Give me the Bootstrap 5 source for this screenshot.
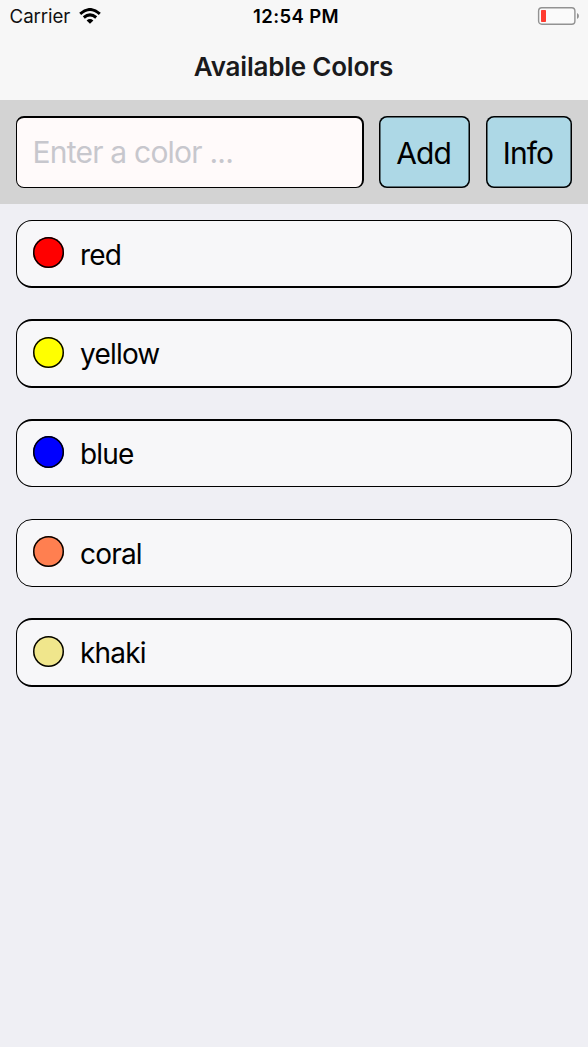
<!DOCTYPE html>
<html lang="en">
<head>
<meta charset="utf-8">
<meta name="viewport" content="width=device-width, initial-scale=1">
<title>Available Colors</title>
<link href="https://cdn.jsdelivr.net/npm/bootstrap@5.3.0/dist/css/bootstrap.min.css" rel="stylesheet">
<style>
body{background:#efeff4;color:#000;font-family:Inter,"Liberation Sans",sans-serif;min-height:1047px}
.topbar{height:100px;background:#f7f7f7}
.status{height:32px;display:grid;grid-template-columns:1fr auto 1fr;font-size:18.7px;line-height:32px;padding:0 9px}
.status svg{margin-bottom:1px}
.carrier{letter-spacing:-.1px;color:#111}
.carrier span{padding:1px 0 0 .6px}
.clock{font-weight:600;font-size:18.5px;letter-spacing:.38px;padding-left:4px}
.wifi{margin-left:8.4px}
.page-title{font-size:26px;font-weight:600;line-height:69px;letter-spacing:-.22px;padding-right:1px;color:#1a1a1c}
.entry{height:104px;background:#d3d3d3;padding:16px}
.entry .form-control{width:348px;height:72px;background:snow;border:solid #000;border-width:2px 2px 1px 1px;border-radius:8px;font-size:30px;letter-spacing:-.78px;padding:0 16px 2px 15.5px;color:#000}
.entry .form-control::placeholder{color:#c7c7cd;opacity:1}
.entry .btn{height:72px;background:#add8e6;border:0;box-shadow:inset 0 0 0 1.5px #000;border-radius:8px;font-size:30px;letter-spacing:-.9px;padding:1px 2px 0 0;line-height:1;color:#000}
.add{width:91px;margin-left:15px}
.info{width:86px;margin-left:16px}
.colors .list-group-item{height:68px;background:#f7f7f9;border:solid #000;border-width:1px;border-radius:16px;padding:0 16px;color:#000;font-size:28px;letter-spacing:-.8px;line-height:1}
.colors .t2{border-top-width:2px}
.colors .b2{border-bottom-width:2px}
.colors .list-group-item.t2{height:69px}
.colors .list-group-item.blue{height:68px}
.dot{width:31px;height:31px;box-shadow:inset 0 0 0 1.5px #000;border-radius:50%;flex:none;margin-bottom:3px}
.blue .dot{height:32px}
.name{margin-left:16px;padding-top:2px}
.t2 .name{padding-top:0}
</style>
</head>
<body>
<header class="topbar">
  <div class="status">
    <div class="d-flex align-items-center carrier"><span>Carrier</span>
      <svg class="wifi" width="22" height="16" viewBox="0 0 22 16"><g fill="none" stroke="#000" stroke-width="3"><path d="M1.2 5.8Q11-2.8 20.8 5.8"/><path d="M4.8 9.5Q11 4.2 17.2 9.5"/></g><path d="M7.6 12.4Q11 9.5 14.4 12.4L11 15.8Z"/></svg>
    </div>
    <div class="clock">12:54 PM</div>
    <div class="d-flex align-items-center justify-content-end">
      <svg width="42" height="20" viewBox="0 0 42 20"><rect x="1.6" y="1.7" width="36.3" height="16.6" rx="3.2" fill="#fafafa" stroke="#929292" stroke-width="1.4"/><rect x="4" y="4" width="5" height="12" rx=".7" fill="#ff3b30"/><path d="M40 7Q42 8 42 10T40 13Z" fill="#929292"/></svg>
    </div>
  </div>
  <h1 class="page-title text-center m-0">Available Colors</h1>
</header>
<form class="entry d-flex">
  <input class="form-control flex-grow-0" placeholder="Enter a color ..." aria-label="Color">
  <button type="button" class="btn add">Add</button>
  <button type="button" class="btn info">Info</button>
</form>
<main class="px-3 pt-3">
  <ul class="list-group colors">
    <li class="list-group-item d-flex align-items-center b2" style="margin-bottom:31px"><span class="dot" style="background:red"></span><span class="name">red</span></li>
    <li class="list-group-item d-flex align-items-center t2 b2" style="margin-bottom:31px"><span class="dot" style="background:yellow"></span><span class="name">yellow</span></li>
    <li class="list-group-item d-flex align-items-center t2 blue" style="margin-bottom:32px"><span class="dot" style="background:blue"></span><span class="name">blue</span></li>
    <li class="list-group-item d-flex align-items-center" style="margin-bottom:31px"><span class="dot" style="background:coral"></span><span class="name">coral</span></li>
    <li class="list-group-item d-flex align-items-center t2 b2"><span class="dot" style="background:khaki"></span><span class="name">khaki</span></li>
  </ul>
</main>
<script src="https://cdn.jsdelivr.net/npm/bootstrap@5.3.0/dist/js/bootstrap.bundle.min.js"></script>
</body>
</html>
